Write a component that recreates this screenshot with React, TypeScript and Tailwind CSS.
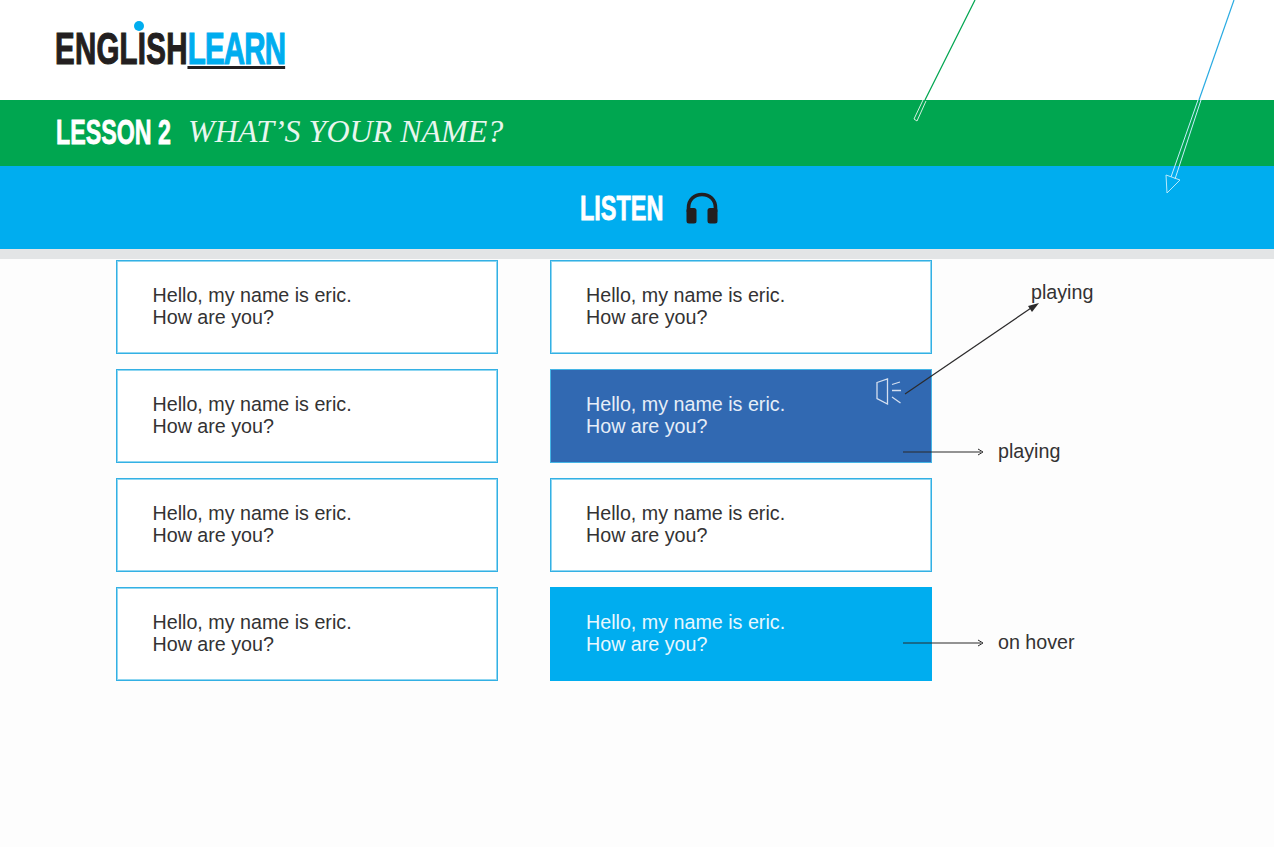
const cards = [
  { id: 1, variant: "plain" },
  { id: 2, variant: "plain" },
  { id: 3, variant: "plain" },
  { id: 4, variant: "playing" },
  { id: 5, variant: "plain" },
  { id: 6, variant: "plain" },
  { id: 7, variant: "plain" },
  { id: 8, variant: "hover" },
];

function Headphones() {
  return (
    <svg width="34" height="32" viewBox="0 0 34 32" fill="none">
      <path d="M3.5 20 V16 C3.5 7.5 9.5 2.5 17 2.5 C24.5 2.5 30.5 7.5 30.5 16 V20" stroke="#231f20" strokeWidth="3.6" />
      <rect x="1.5" y="16" width="10" height="15.5" rx="2.5" fill="#231f20" />
      <rect x="22.5" y="16" width="10" height="15.5" rx="2.5" fill="#231f20" />
    </svg>
  );
}

function Speaker() {
  return (
    <svg className="absolute left-[324px] top-[7px]" width="30" height="28" viewBox="0 0 30 28" fill="none" stroke="#d4dff0" strokeWidth="1.3">
      <path d="M2 5.5 L12.5 2 V27 L2 21.5 Z" />
      <path d="M17 7.5 L25 5 M17 13.5 H26 M17 20 L25.5 26" />
    </svg>
  );
}

function Card({ variant }: { variant: string }) {
  const style =
    variant === "playing"
      ? "bg-[#3169b2] border-[#45b5e6] text-[#e6eef8]"
      : variant === "hover"
        ? "bg-[#00adef] border-[#00adef] text-[#e8f7fe]"
        : "bg-white border-[#33b0e4] shadow-[inset_0_0_0_1px_#8fd6f1] text-[#333233]";
  return (
    <div className={`relative h-[94px] border pl-[35.5px] pt-[23px] text-[19.7px] leading-[22px] ${style}`}>
      {variant === "playing" ? <Speaker /> : null}
      <p>Hello, my name is eric.</p>
      <p>How are you?</p>
    </div>
  );
}

export default function App() {
  return (
    <div className="relative w-[1274px] h-[847px] overflow-hidden bg-[#fdfdfd] font-['Liberation_Sans',sans-serif]">
      <header className="h-[100px] bg-white pl-[55px] pt-[24px]">
        <div className="relative w-[230px]">
          <div className="flex items-start origin-left scale-x-[0.669] whitespace-nowrap font-bold text-[44px] leading-[50px]">
            <span className="text-[#231f20] tracking-[0.4px] [-webkit-text-stroke:1.2px_#231f20]">ENGLISH</span>
            <span className="text-[#00adef] tracking-[-1.2px] [-webkit-text-stroke:1.2px_#00adef] border-b-[3px] border-[#231f20] h-[45px]">LEARN</span>
          </div>
          <span className="absolute left-[79px] top-[-3px] w-[10px] h-[10px] rounded-full bg-[#00adef]" />
        </div>
      </header>

      <div className="h-[66px] bg-[#00a650] pl-[56px] flex items-center gap-[17px]">
        <div className="w-[115px] mb-[2px]">
          <span className="block origin-left scale-x-[0.664] whitespace-nowrap font-bold text-[35px] leading-[40px] text-white [-webkit-text-stroke:0.8px_white]">LESSON 2</span>
        </div>
        <span className="font-['Liberation_Serif',serif] italic text-[32px] leading-[36px] mb-[4px] text-[#e8f6ee]">WHAT’S YOUR NAME?</span>
      </div>

      <div className="h-[83px] bg-[#00adef] pl-[24px] flex items-center justify-center gap-[22px]">
        <div className="w-[83px]">
          <span className="block origin-left scale-x-[0.67] whitespace-nowrap font-bold text-[35px] leading-[40px] text-white [-webkit-text-stroke:0.8px_white]">LISTEN</span>
        </div>
        <Headphones />
      </div>

      <div className="h-[10px] bg-[#e3e5e6]" />

      <div className="mt-[1px] grid grid-cols-[382px_382px] gap-x-[51.5px] gap-y-[15px] pl-[116px]">
        {cards.map((c) => (
          <Card key={c.id} variant={c.variant} />
        ))}
      </div>

      <span className="absolute left-[1031px] top-[281px] text-[19.7px] leading-[22px] text-[#333233]">playing</span>
      <span className="absolute left-[998px] top-[440px] text-[19.7px] leading-[22px] text-[#333233]">playing</span>
      <span className="absolute left-[998px] top-[631px] text-[19.7px] leading-[22px] text-[#333233]">on hover</span>

      <svg className="absolute inset-0" width="1274" height="847" viewBox="0 0 1274 847" fill="none">
        <path d="M975 0 L925 100" stroke="#00a650" strokeWidth="1.2" />
        <path d="M923 100 L914 119 L917 121 L926 101" stroke="#d5f0e0" strokeWidth="1" />
        <path d="M1234 0 L1199 100" stroke="#29abe2" strokeWidth="1.2" />
        <path d="M1198 100 L1171 177 M1201 100 L1175 179" stroke="#c8eefc" strokeWidth="1" />
        <path d="M1166 175 L1167 193 L1180 180 Z" stroke="#b9e9fb" strokeWidth="1" />
        <path d="M905 394 L1034 306" stroke="#2b2a2b" strokeWidth="1.2" />
        <path d="M1039 303 L1028 306 L1032 312 Z" fill="#2b2a2b" />
        <path d="M903 452 H981" stroke="#2b2a2b" strokeWidth="1.2" />
        <path d="M978 449 L983 452 L978 455" stroke="#2b2a2b" strokeWidth="1" />
        <path d="M903 643 H981" stroke="#2b2a2b" strokeWidth="1.2" />
        <path d="M978 640 L983 643 L978 646" stroke="#2b2a2b" strokeWidth="1" />
      </svg>
    </div>
  );
}
